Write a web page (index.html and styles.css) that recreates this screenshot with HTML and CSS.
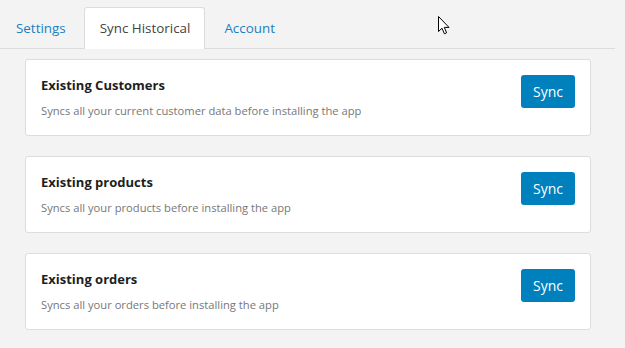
FILE: index.html
```html
<!DOCTYPE html>
<html lang="en">
<head>
    <meta charset="UTF-8">
    <meta name="viewport" content="width=device-width, initial-scale=1.0">
    <title>Sync Historical</title>
    <link rel="stylesheet" href="styles.css">
</head>
<body>

<div class="tabs">
    <a class="tab" href="#">Settings</a>
    <a class="tab active" href="#">Sync Historical</a>
    <a class="tab" href="#">Account</a>
</div>

<div class="sync-list">
    <div class="sync-card">
        <div class="sync-info">
            <h3>Existing Customers</h3>
            <p>Syncs all your current customer data before installing the app</p>
        </div>
        <button class="sync-button">Sync</button>
    </div>
    <div class="sync-card">
        <div class="sync-info">
            <h3>Existing products</h3>
            <p>Syncs all your products before installing the app</p>
        </div>
        <button class="sync-button">Sync</button>
    </div>
    <div class="sync-card">
        <div class="sync-info">
            <h3>Existing orders</h3>
            <p>Syncs all your orders before installing the app</p>
        </div>
        <button class="sync-button">Sync</button>
    </div>
</div>

<svg class="cursor" width="13" height="20" viewBox="0 0 13 20">
    <path d="M0.5 0.5 L0.5 15.5 L4 12.2 L6.4 17.8 L8.6 16.8 L6.3 11.4 L11 11.4 Z" fill="#fff" stroke="#000" stroke-width="1" stroke-linejoin="miter"/>
</svg>

</body>
</html>
```

FILE: styles.css
```css
body {
    font-family: "Open Sans", Arial, sans-serif;
    margin: 0;
    padding: 0;
    background-color: #f3f3f3;
    position: relative;
}
.tabs {
    display: flex;
    padding-top: 7px;
    margin-right: 10px;
    border-bottom: 1px solid #dcdcdc;
}
.tab {
    display: block;
    height: 41px;
    line-height: 41px;
    padding: 0 14px 0 15px;
    margin-right: 3px;
    margin-bottom: -1px;
    border: 1px solid transparent;
    border-bottom: none;
    border-radius: 3px 3px 0 0;
    font-size: 13.4px;
    color: #1a7fbf;
    text-decoration: none;
}
.tab.active {
    background-color: #fff;
    border-color: #dcdcdc;
    color: #444;
}
.sync-list {
    margin: 10px 34px 0 25px;
    display: flex;
    flex-direction: column;
    gap: 20px;
}
.sync-card {
    display: flex;
    justify-content: space-between;
    align-items: flex-start;
    height: 75px;
    padding: 0 15px;
    background-color: #fff;
    border: 1px solid #dcdcdc;
    border-radius: 3px;
}
.sync-info h3 {
    margin: 16px 0 0;
    font-size: 13px;
    line-height: 18px;
    font-weight: 700;
    color: #1e1e1e;
}
.sync-info p {
    margin: 8px 0 0;
    font-size: 11.2px;
    line-height: 18px;
    color: #777;
}
.sync-button {
    margin-top: 15px;
    width: 54px;
    height: 33px;
    padding: 0;
    border: none;
    border-radius: 3px;
    background-color: #0080bd;
    color: #fff;
    font-family: inherit;
    font-size: 14px;
    cursor: pointer;
}
.cursor {
    position: absolute;
    left: 438px;
    top: 16px;
}
```
